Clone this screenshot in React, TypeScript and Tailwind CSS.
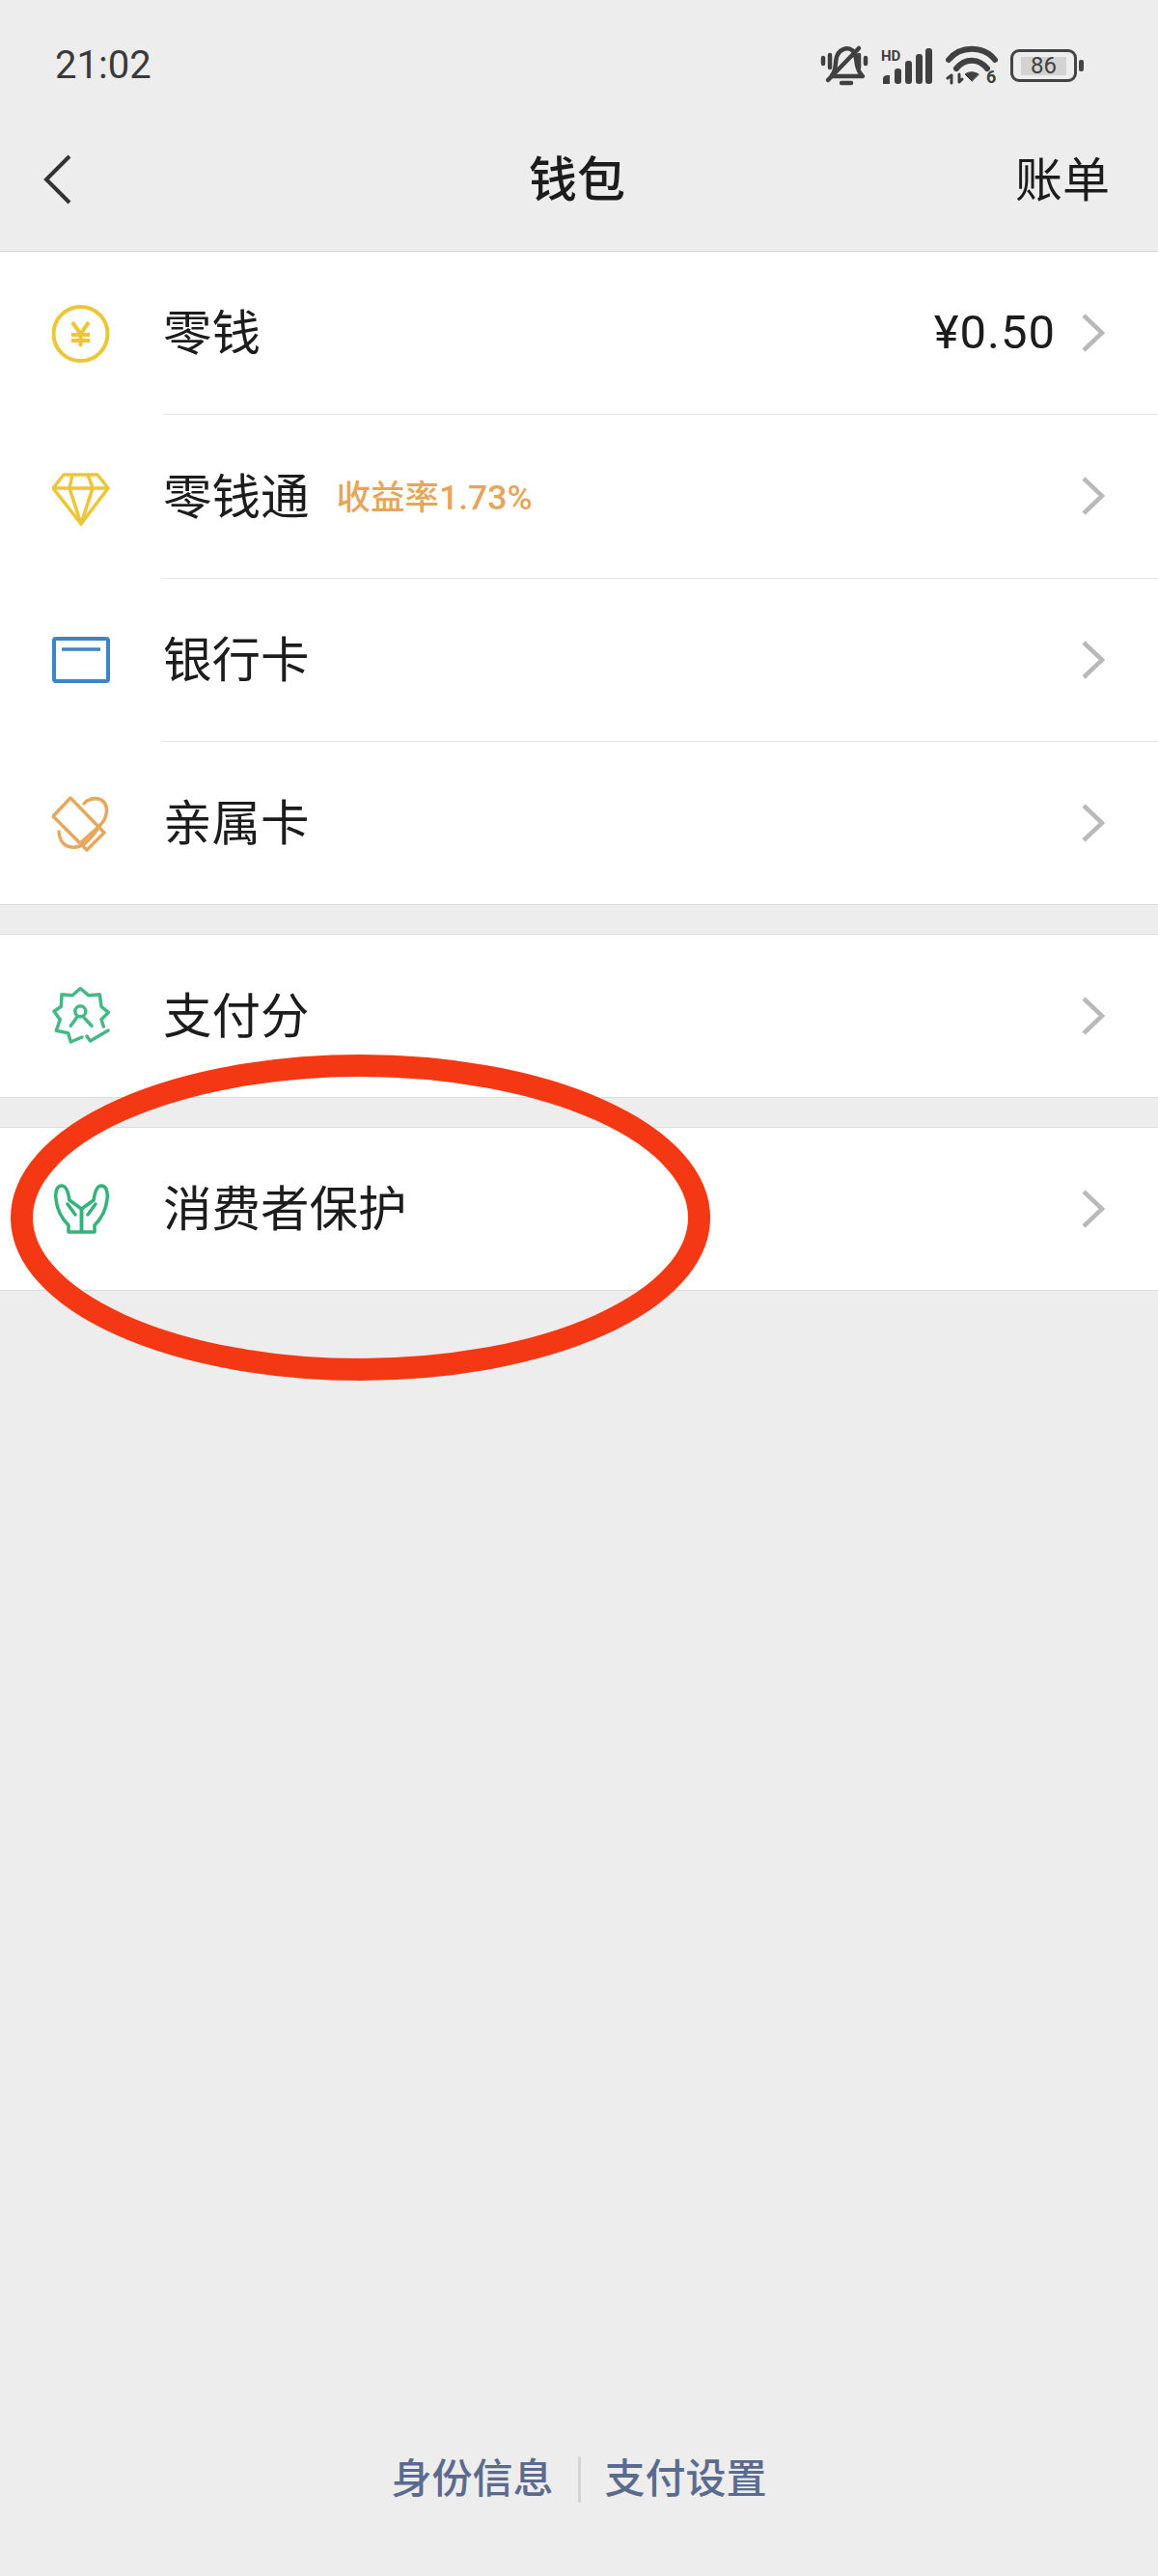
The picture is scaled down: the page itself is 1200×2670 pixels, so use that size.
const Chevron = () => (
  <svg width="24" height="40" viewBox="0 0 24 40" fill="none" className="shrink-0">
    <path d="M2 2L21 20L2 38" stroke="#b9b9b9" strokeWidth="4.5" />
  </svg>
);

const YenIcon = () => (
  <svg width="60" height="60" viewBox="0 0 60 60" fill="none" stroke="#ecc638">
    <circle cx="29.5" cy="30" r="28" strokeWidth="4" />
    <path d="M21 18L29.5 30L38 18M29.5 30V43M20 31H39M20 37H39" strokeWidth="4" />
  </svg>
);

const DiamondIcon = () => (
  <svg width="60" height="60" viewBox="0 0 60 60" fill="none" stroke="#ecc638" strokeWidth="3.5" strokeLinejoin="round">
    <path d="M12 7H47L58 21L30 58L1 21Z" />
    <path d="M1 21H58M21 7L18 21L30 58L42 21L37 7" />
  </svg>
);

const BankIcon = () => (
  <svg width="60" height="60" viewBox="0 0 60 60" fill="none" stroke="#3d85c6">
    <rect x="2" y="8" width="56" height="44" rx="2" strokeWidth="4" />
    <path d="M10 19H50" strokeWidth="3.5" />
  </svg>
);

const FamilyIcon = () => (
  <svg width="60" height="60" viewBox="0 0 60 60" fill="none" stroke="#e6a85e" strokeWidth="3.5" strokeLinejoin="round" strokeLinecap="round">
    <path d="M19 4L1 23L36 58L54 40Z" />
    <path d="M48 34L29 51" />
    <path d="M33 10C37 5 44 4 48 5C55 7 58 14 56 21C55 26 53 29 50 32C43 43 36 51 29 54C20 57 8 55 7 39" />
  </svg>
);

const ScoreIcon = () => (
  <svg width="60" height="60" viewBox="0 0 60 60" fill="none" stroke="#45b985" strokeWidth="3.5" strokeLinejoin="round" strokeLinecap="round">
    <path d="M53.3 41L51 33.7L58.5 26.3L51 20.3L49.3 7.7L37.7 8.7L29.3 1.5L21 8.7L10 7.7L9.3 20.3L2 25.3L8.3 33.7L4.3 45.3L16.7 47.7L19.3 57L31 52" />
    <circle cx="29.3" cy="25.3" r="5.5" />
    <path d="M25.3 32L19.3 40.3M33.3 32L41 40.3" />
    <path d="M36 51L39.5 56L58 45" />
  </svg>
);

const HandsIcon = () => {
  const hand = "M30.5 30L18 21C17 14 15 6 10 6C5 6 3 12 4 20C5 30 10 40 17 47V54H30.5Z M16 25L24 36";
  return (
    <svg width="60" height="60" viewBox="0 0 60 60" fill="none" stroke="#35b27c" strokeWidth="3.5" strokeLinejoin="round" strokeLinecap="round">
      <path d={hand} />
      <path d={hand} transform="translate(61 0) scale(-1 1)" />
    </svg>
  );
};

interface RowProps {
  icon: React.ReactNode;
  title: string;
  tag?: string;
  value?: string;
  last?: boolean;
}

const Row = ({ icon, title, tag, value, last }: RowProps) => {
  return (
    <div className={last ? "flex h-[168px] items-center bg-white" : "flex h-[169.25px] items-center bg-white"}>
      <div className="flex w-[168px] shrink-0 pl-[54px]">{icon}</div>
      <div className={last ? "flex h-full flex-1 items-center pr-[55px]" : "flex h-full flex-1 items-center border-b border-[#e6e6e6] pr-[55px]"}>
        <span className="ml-[1px] mt-[2px] text-[50.5px] text-[#1c1c1c]">{title}</span>
        {tag && <span className="ml-[28px] mt-[4px] text-[35.5px] font-medium text-[#e5a65a]">{tag}</span>}
        {value && <span className="ml-auto text-[49px] tracking-[1px] text-[#1c1c1c]">{value}</span>}
        <div className={value ? "ml-[27px]" : "ml-auto"}>
          <Chevron />
        </div>
      </div>
    </div>
  );
};

const StatusIcons = () => (
  <div className="flex items-center">
    <svg width="50" height="44" viewBox="0 0 50 44" fill="none" stroke="#404040" strokeWidth="4.5" strokeLinecap="round" strokeLinejoin="round">
      <path d="M3 14V20M10 11V24M40 11V24M47 14V20" />
      <path d="M12 32C17 27 15 20 17 13C19 6 27 2 33 6C37 9 37 15 38 21C39 27 41 30 44 33H12" />
      <path d="M40 4L8 37" />
      <path d="M22 40H32" />
    </svg>
    <svg width="56" height="40" viewBox="0 -2 56 40" className="ml-[12px]" fill="#404040">
      <text x="1" y="13" fontSize="15" fontWeight="700" fontFamily="Roboto, sans-serif" fill="#404040">HD</text>
      <path d="M3 33a4 4 0 0 1 4-5h3v9H3Z" />
      <rect x="15" y="21" width="7" height="16" rx="3" />
      <rect x="26" y="13" width="7" height="24" rx="3" />
      <rect x="37" y="6" width="7" height="31" rx="3" />
      <rect x="47" y="0" width="7" height="37" rx="3" />
    </svg>
    <svg width="54" height="44" viewBox="0 -2 54 44" className="ml-[12px]" fill="none" stroke="#404040" strokeLinecap="round">
      <path d="M3 14C15 -1 39 -1 51 14" strokeWidth="6" />
      <path d="M11 23C20 12 34 12 43 23" strokeWidth="6" />
      <path d="M27 36L20 29C24 26 30 26 34 29Z" fill="#404040" strokeWidth="1" />
      <path d="M6 30V38M2 33L6 30M14 29V37M14 37L17 34" strokeWidth="3" />
      <text x="42" y="38" fontSize="18" fontWeight="700" fontFamily="Roboto, sans-serif" fill="#404040" stroke="none">6</text>
    </svg>
    <div className="ml-[13px] flex h-[34px] w-[69px] items-center justify-center rounded-[9px] border-[3px] border-[#444444]">
      <div className="flex h-[19px] w-[47px] items-center justify-center bg-[#d3d3d3] text-[24px] leading-none text-[#404040]">86</div>
    </div>
    <div className="ml-[2px] h-[12px] w-[5px] rounded-[2px] bg-[#444444]" />
  </div>
);

export default function App() {
  return (
    <div className="relative flex h-[2670px] w-[1200px] flex-col overflow-hidden bg-[#ededed] font-['Roboto','Noto_Sans_CJK_SC',sans-serif]">
      <div className="flex h-[112px] items-center justify-between pl-[57px] pr-[77px] pt-6">
        <span className="text-[40px] text-[#3a3a3a]">21:02</span>
        <StatusIcons />
      </div>

      <div className="grid h-[149px] grid-cols-[1fr_auto_1fr] items-center border-b border-[#d6d6d6] pl-[44px] pr-[50px]">
        <svg width="30" height="52" viewBox="0 0 30 52" fill="none">
          <path d="M28 2L4 26L28 50" stroke="#333333" strokeWidth="4" />
        </svg>
        <span className="ml-[2px] mt-[3px] text-[50px] font-medium text-[#1c1c1c]">钱包</span>
        <span className="mt-[3px] justify-self-end text-[49px] text-[#1c1c1c]">账单</span>
      </div>

      <div className="border-b border-[#dcdcdc]">
        <Row icon={<YenIcon />} title="零钱" value="¥0.50" />
        <Row icon={<DiamondIcon />} title="零钱通" tag="收益率1.73%" />
        <Row icon={<BankIcon />} title="银行卡" />
        <Row icon={<FamilyIcon />} title="亲属卡" last />
      </div>

      <div className="mt-[30.25px] border-y border-[#dcdcdc]">
        <Row icon={<ScoreIcon />} title="支付分" last />
      </div>

      <div className="mt-[30px] border-y border-[#dcdcdc]">
        <Row icon={<HandsIcon />} title="消费者保护" last />
      </div>

      <div className="mt-auto flex items-center justify-center pb-[69px] text-[42px] font-medium text-[#5b6b8f]">
        <span>身份信息</span>
        <div className="mx-[25px] h-[48px] w-[3px] bg-[#d4d4d4]" />
        <span>支付设置</span>
      </div>

      <svg
        width="725"
        height="338"
        viewBox="0 0 725 338"
        fill="none"
        className="absolute left-[11px] top-[1093px]"
      >
        <ellipse cx="362.5" cy="169" rx="351" ry="157.5" stroke="#f53814" strokeWidth="23" />
      </svg>
    </div>
  );
}
